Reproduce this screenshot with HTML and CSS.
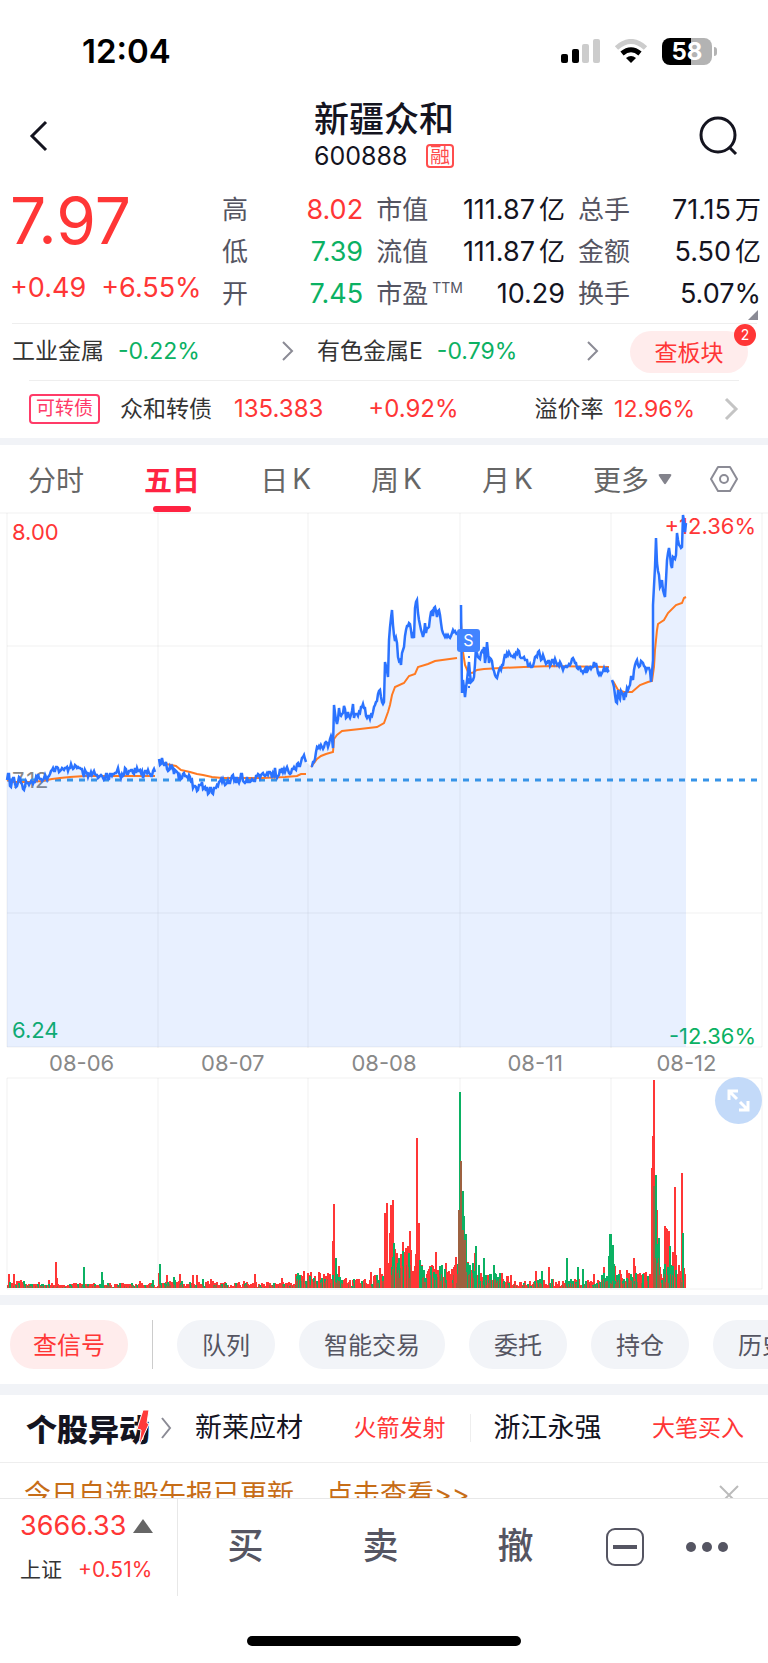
FILE: index.html
```html
<!DOCTYPE html>
<html lang="zh-CN">
<head>
    <meta charset="UTF-8">
    <meta name="viewport" content="width=device-width, initial-scale=1.0">
    <title>新疆众和 600888</title>
    <link rel="stylesheet" href="styles.css">
</head>
<body>
    <div class="status-bar">
        <span class="clock">12:04</span>
        <div class="status-icons">
            <svg width="39" height="24" viewBox="0 0 39 24">
                <rect x="0" y="15" width="7" height="9" rx="2"/>
                <rect x="11" y="10" width="7" height="14" rx="2"/>
                <rect x="21" y="5" width="7" height="19" rx="2" fill="#ccc"/>
                <rect x="32" y="0" width="7" height="24" rx="2" fill="#ccc"/>
            </svg>
            <svg width="34" height="24" viewBox="0 0 34 24" fill="none">
                <path d="M2.500 9 Q17 -4 31.500 9" stroke="#ccc" stroke-width="5"/>
                <path d="M8 14.500 Q17 7 26 14.500" stroke="#000" stroke-width="5"/>
                <path d="M12 19 Q17 15 22 19 L17 24 Z" fill="#000"/>
            </svg>
            <div class="battery"><span class="battery-level">58</span></div>
        </div>
    </div>

    <header class="header">
        <button class="icon-button" aria-label="返回">
            <svg width="20" height="32" viewBox="0 0 20 32" fill="none" stroke="#14141f" stroke-width="3"><path d="M17 2 L3 16 L17 30"/></svg>
        </button>
        <div class="header-title">
            <h1>新疆众和</h1>
            <p>600888 <span class="margin-tag">融</span></p>
        </div>
        <button class="icon-button" aria-label="搜索">
            <svg width="40" height="40" viewBox="0 0 40 40" fill="none" stroke="#14141f" stroke-width="3"><circle cx="19" cy="19" r="17"/><path d="M30 31 L37 38"/></svg>
        </button>
    </header>

    <section class="quote">
        <div class="quote-price">
            <div class="price">7.97</div>
            <div class="change"><span>+0.49</span><span>+6.55%</span></div>
        </div>
        <dl>
            <dt>高</dt><dd class="up">8.02</dd>
            <dt>低</dt><dd class="down">7.39</dd>
            <dt>开</dt><dd class="down">7.45</dd>
        </dl>
        <dl>
            <dt>市值</dt><dd>111.87<i>亿</i></dd>
            <dt>流值</dt><dd>111.87<i>亿</i></dd>
            <dt>市盈<sup>TTM</sup></dt><dd>10.29</dd>
        </dl>
        <dl>
            <dt>总手</dt><dd>71.15<i>万</i></dd>
            <dt>金额</dt><dd>5.50<i>亿</i></dd>
            <dt>换手</dt><dd>5.07%</dd>
        </dl>
    </section>

    <section class="sectors">
        <a class="sector" href="#">工业金属 <span class="down">-0.22%</span>
            <svg width="14" height="22" viewBox="0 0 14 22"><path d="M2 2 L11 11 L2 20"/></svg></a>
        <a class="sector" href="#">有色金属E <span class="down">-0.79%</span>
            <svg width="14" height="22" viewBox="0 0 14 22"><path d="M2 2 L11 11 L2 20"/></svg></a>
        <button class="board-button">查板块<span class="count">2</span></button>
    </section>

    <a class="bond" href="#">
        <span class="bond-tag">可转债</span>
        <span class="bond-name">众和转债</span>
        <span class="bond-price up">135.383</span>
        <span class="bond-change up">+0.92%</span>
        <span class="bond-premium">溢价率 <span class="up">12.96%</span></span>
        <svg width="16" height="26" viewBox="0 0 16 26"><path d="M3 3 L13 13 L3 23"/></svg>
    </a>

    <nav class="tabs">
        <button>分时</button>
        <button class="active">五日</button>
        <button>日<span>K</span></button>
        <button>周<span>K</span></button>
        <button>月<span>K</span></button>
        <button class="more">更多<svg width="14" height="12" viewBox="0 0 14 12"><path d="M2 1 H12 Q14 1 13 3 L8 10.500 Q7 12 6 10.500 L1 3 Q0 1 2 1Z" fill="#83838c"/></svg></button>
        <button class="settings" aria-label="设置">
            <svg width="28" height="26" viewBox="0 0 28 26" fill="none" stroke="#8b8b95" stroke-width="2"><path d="M8 1 H20 L27 13 L20 25 H8 L1 13Z" stroke-linejoin="round"/><circle cx="14" cy="13" r="4"/></svg>
        </button>
    </nav>

    <section class="price-chart">
        <span class="label top-left up">8.00</span>
        <span class="label top-right up">+12.36%</span>
        <span class="label middle-left">7.12</span>
        <span class="label bottom-left down">6.24</span>
        <span class="label bottom-right down">-12.36%</span>
        <svg viewBox="0 0 768 536" fill="none">
            <path class="grid" d="M0 1H768 M7 134H762 M7 401H762 M7 535H762 M7 1V535 M158 1V536 M308 1V536 M460 1V536 M611 1V536 M762 1V535"/>
            <path id="area" fill="#2b73ff" fill-opacity="0.11"/>
            <path d="M7 268H762" stroke="#3794e8" stroke-width="3" stroke-dasharray="6 6"/>
            <path id="average" stroke="#ff7a22" stroke-width="2"/>
            <path id="price" stroke="#2b73ff" stroke-width="2.500"/>
            <path d="M469 144V176" stroke="#2b73ff" stroke-width="2" stroke-dasharray="2 4"/>
            <circle cx="469" cy="169" r="3" fill="#2b73ff"/>
            <rect x="457" y="117" width="23" height="23" rx="3" fill="#4284ff"/>
            <text class="sell-mark" x="468.500" y="134" text-anchor="middle">S</text>
        </svg>
    </section>
    <div class="dates">
        <span>08-06</span><span>08-07</span><span>08-08</span><span>08-11</span><span>08-12</span>
    </div>
    <section class="volume-chart">
        <svg viewBox="0 0 768 213" fill="none">
            <path class="grid" d="M7 1H762V212H7Z M158 1V212 M308 1V212 M460 1V212 M611 1V212"/>
            <path id="volume-up" fill="#ff3636"/>
            <path id="volume-down" fill="#0bb163"/>
            <path id="volume-mixed" fill="#9d6140"/>
        </svg>
        <button class="expand" aria-label="全屏">
            <svg width="23" height="23" viewBox="0 0 23 23" fill="none" stroke="#fff" stroke-width="3"><path d="M2 11V2H11 M3 3L10 10 M21 12V21H12 M20 20L13 13"/></svg>
        </button>
    </section>

    <nav class="chips">
        <button class="chip signal">查信号</button>
        <span class="chip-divider"></span>
        <button class="chip">队列</button>
        <button class="chip">智能交易</button>
        <button class="chip">委托</button>
        <button class="chip">持仓</button>
        <button class="chip">历史</button>
    </nav>

    <section class="moves">
        <a class="moves-logo" href="#">个股异动<svg width="12" height="36" viewBox="0 0 12 36"><path d="M6 0 L12 0 L10 13 L12 14 L2 36 L4 20 L0 19Z" fill="#ff3a3a" stroke="#fff" stroke-width="1"/></svg></a>
        <svg width="12" height="24" viewBox="0 0 12 24"><path d="M2 2 L10 12 L2 22"/></svg>
        <div class="move"><span>新莱应材</span><em>火箭发射</em></div>
        <div class="move"><span>浙江永强</span><em>大笔买入</em></div>
    </section>

    <div class="notice">
        <a href="#"><span>今日自选股午报已更新</span><span>点击查看&gt;&gt;</span></a>
        <button aria-label="关闭"><svg width="20" height="20" viewBox="0 0 20 20" stroke="#bbb" stroke-width="2"><path d="M1 1L19 19M19 1L1 19"/></svg></button>
    </div>

    <footer class="trade-bar">
        <a class="index" href="#">
            <span class="index-value">3666.33<svg width="20" height="14" viewBox="0 0 20 14"><path d="M10 0L20 14H0Z" fill="#666"/></svg></span>
            <span class="index-name">上证 <span class="up">+0.51%</span></span>
        </a>
        <div class="trade-actions">
            <button>买</button>
            <button>卖</button>
            <button>撤</button>
        </div>
        <button aria-label="收起">
            <svg width="38" height="38" viewBox="0 0 38 38" fill="none" stroke="#555562"><rect x="1" y="1" width="36" height="36" rx="8" stroke-width="2"/><path d="M7 19H31" stroke-width="4"/></svg>
        </button>
        <button class="dots" aria-label="更多">
            <svg width="42" height="10" viewBox="0 0 42 10" fill="#555562"><circle cx="5" cy="5" r="5"/><circle cx="21" cy="5" r="5"/><circle cx="37" cy="5" r="5"/></svg>
        </button>
    </footer>
    <div class="home-indicator"></div>

    <script src="script.js"></script>
</body>
</html>
```

FILE: styles.css
```css
* {
    box-sizing: border-box;
}
body {
    margin: 0;
    background: #fff;
    color: #14141f;
    font-family: Inter, "Noto Sans CJK SC", sans-serif;
    font-size: 23px;
    overflow-x: hidden;
}
button {
    font: inherit;
    color: inherit;
    background: none;
    border: none;
    padding: 0;
    cursor: pointer;
}
a {
    color: inherit;
    text-decoration: none;
}
svg {
    display: block;
    flex-shrink: 0;
}
.up {
    color: #ff3636;
}
.down {
    color: #0bb163;
}

/* status bar and header */
.status-bar {
    display: flex;
    justify-content: space-between;
    align-items: center;
    height: 98px;
    padding: 4px 56px 0 82px;
    color: #000;
}
.clock {
    font-size: 33px;
    font-weight: 600;
}
.status-icons {
    display: flex;
    align-items: center;
    gap: 14px;
}
.battery {
    position: relative;
    width: 50px;
    height: 27px;
    border-radius: 8px;
    background: linear-gradient(90deg, #000 58%, #b3b3b3 58%);
    color: #fff;
    font-size: 24px;
    font-weight: 700;
    line-height: 27px;
    text-align: center;
}
.battery::after {
    content: "";
    position: absolute;
    right: -5px;
    top: 9px;
    width: 3px;
    height: 9px;
    border-radius: 0 4px 4px 0;
    background: #b3b3b3;
}
.header {
    display: flex;
    justify-content: space-between;
    align-items: flex-start;
    height: 91px;
    padding: 0 29px;
}
.header .icon-button {
    display: flex;
    align-items: center;
    width: 40px;
    height: 76px;
}
.header h1 {
    margin: 0;
    font-size: 35px;
    font-weight: 500;
    line-height: 42px;
}
.header p {
    display: flex;
    justify-content: space-between;
    align-items: center;
    margin: 0;
    font-size: 25px;
    line-height: 32px;
}
.margin-tag {
    border: 2px solid #ff4d4d;
    border-radius: 4px;
    color: #ff4d4d;
    font-size: 20px;
    line-height: 20px;
    padding: 0 2px;
}

/* quote */
.quote {
    position: relative;
    display: grid;
    grid-template-columns: 200fr 142fr 184fr 184fr;
    column-gap: 13px;
    height: 135px;
    margin: 0 7px 0 10px;
}
.quote::before {
    content: "";
    position: absolute;
    right: 3px;
    bottom: 4px;
    border-left: 10px solid transparent;
    border-bottom: 10px solid #8b8b95;
}
.quote::after {
    content: "";
    position: absolute;
    left: 2px;
    right: 4px;
    bottom: 0;
    border-bottom: 1px solid #eee;
}
.quote-price {
    color: #ff3636;
    white-space: nowrap;
}
.price {
    font-size: 64px;
    line-height: 64px;
}
.change {
    display: flex;
    gap: 15px;
    font-size: 27px;
    line-height: 32px;
    padding-top: 19px;
}
.quote dl {
    display: grid;
    grid-template-columns: auto 1fr;
    grid-auto-rows: 42px;
    margin: 0;
    font-size: 26px;
    line-height: 42px;
}
.quote dt {
    color: #555562;
    white-space: nowrap;
}
.quote dt sup {
    font-size: 14px;
    line-height: 14px;
    margin-left: 4px;
    vertical-align: 10px;
}
.quote dd {
    margin: 0;
    font-size: 27px;
    text-align: right;
    white-space: nowrap;
}
.quote dd i {
    font-style: normal;
    font-size: 26px;
    margin-left: 4px;
}

/* sectors and bond */
.sectors {
    display: flex;
    align-items: center;
    height: 56px;
    padding: 0 20px 0 12px;
    color: #333;
}
.sector {
    display: flex;
    align-items: center;
    gap: 14px;
    width: 305px;
    padding-right: 22px;
    line-height: 32px;
    padding-bottom: 2px;
}
.sector svg {
    margin-left: auto;
}
.sector path,
.bond path,
.moves > svg path {
    fill: none;
    stroke: #8b8b95;
    stroke-width: 2;
}
.board-button {
    position: relative;
    width: 118px;
    height: 42px;
    margin-left: auto;
    padding-bottom: 2px;
    border-radius: 21px;
    background: #ffecec;
    color: #ff3636;
}
.count {
    position: absolute;
    top: -7px;
    right: -8px;
    width: 22px;
    height: 22px;
    border-radius: 50%;
    background: #ff3636;
    color: #fff;
    font-size: 14px;
    line-height: 22px;
}
.bond {
    display: flex;
    align-items: center;
    height: 58px;
    margin: 0 29px;
    padding-bottom: 1px;
    border-top: 1px solid #eee;
    color: #333;
    line-height: 32px;
    white-space: nowrap;
}
.bond-tag {
    border: 2px solid #ff3b68;
    border-radius: 4px;
    color: #ff3b68;
    font-size: 19px;
    line-height: 26px;
    padding: 0 5px;
}
.bond-name {
    margin-left: 20px;
}
.bond-price {
    margin-left: 22px;
    font-size: 24px;
}
.bond-change {
    margin-left: 45px;
    font-size: 24px;
}
.bond-premium {
    margin-left: auto;
}
.bond-premium .up {
    margin-left: 4px;
}
.bond svg {
    margin-left: 28px;
}
.bond path {
    stroke: #c4c4c4;
    stroke-width: 3;
}

/* period tabs */
.tabs {
    display: flex;
    justify-content: space-between;
    border-top: 7px solid #f1f3f7;
    height: 74px;
    padding: 0 30px 0 28px;
    color: #666;
    font-size: 28px;
}
.tabs button {
    position: relative;
    display: flex;
    align-items: center;
    white-space: nowrap;
}
.tabs span {
    margin-left: 4px;
}
.tabs .active {
    color: #ff2342;
    font-weight: 700;
}
.tabs .active::after {
    content: "";
    position: absolute;
    left: 9px;
    right: 9px;
    bottom: 0;
    height: 6px;
    border-radius: 3px;
    background: #ff2342;
}
.tabs .more {
    gap: 9px;
}
.tabs .settings {
    margin-left: -22px;
}

/* charts */
.price-chart,
.volume-chart {
    position: relative;
}
.price-chart svg,
.volume-chart > svg {
    position: relative;
    width: 100%;
    height: auto;
}
.grid {
    stroke: #000;
    stroke-opacity: 0.06;
}
.label {
    position: absolute;
    font-size: 22px;
    line-height: 24px;
}
.top-left {
    top: 8px;
    left: 12px;
}
.top-right {
    top: 2px;
    right: 12px;
}
.middle-left {
    top: 50%;
    left: 12px;
    margin-top: -12px;
    color: #888;
}
.bottom-left {
    bottom: 6px;
    left: 12px;
}
.bottom-right {
    bottom: 0;
    right: 12px;
}
.sell-mark {
    fill: #fff;
    font-size: 16px;
}
.dates {
    display: flex;
    height: 29px;
    padding: 0 6px;
    color: #888;
    font-size: 22px;
    line-height: 30px;
}
.dates span {
    flex: 1;
    text-align: center;
}
.expand {
    position: absolute;
    top: 0;
    right: 6px;
    display: flex;
    align-items: center;
    justify-content: center;
    width: 47px;
    height: 47px;
    border-radius: 50%;
    background: #c3daf9;
}

/* shortcut chips */
.chips {
    display: flex;
    align-items: center;
    gap: 24px;
    height: 100px;
    margin-top: 5px;
    padding-left: 10px;
    border: solid #f1f3f7;
    border-width: 10px 0 11px;
    overflow: hidden;
    font-size: 24px;
}
.chip {
    flex-shrink: 0;
    height: 49px;
    padding: 0 25px 2px;
    border-radius: 24px;
    background: #f2f4f8;
    color: #555562;
}
.signal {
    padding: 0 23px 2px;
    background: #ffecec;
    color: #ff3636;
}
.chip-divider {
    flex-shrink: 0;
    width: 1px;
    height: 49px;
    background: #ccc;
}

/* stock moves */
.moves {
    display: flex;
    align-items: center;
    height: 68px;
    padding: 0 24px 2px 26px;
    border-bottom: 1px solid #eee;
    white-space: nowrap;
}
.moves-logo {
    position: relative;
    margin-right: 10px;
    font-size: 31px;
    font-weight: 900;
}
.moves-logo svg {
    position: absolute;
    right: 1px;
    bottom: 4px;
}
.move {
    flex: 1;
    display: flex;
    align-items: center;
    justify-content: space-between;
    padding: 0 24px 0 23px;
    font-size: 27px;
    line-height: 28px;
}
.move + .move {
    padding-right: 0;
    border-left: 1px solid #eee;
}
.move em {
    color: #ff3636;
    font-size: 23px;
    font-style: normal;
}

/* notice strip, cut off by the trade bar */
.notice {
    display: flex;
    justify-content: space-between;
    height: 35px;
    padding: 12px 29px 0 24px;
    overflow: hidden;
    color: #c76d17;
    font-size: 27px;
    line-height: 40px;
}
.notice a {
    display: flex;
    gap: 32px;
}
.notice button {
    padding-top: 10px;
    height: 30px;
}

/* trade bar */
.trade-bar {
    display: flex;
    align-items: center;
    height: 97px;
    padding-right: 40px;
    border-top: 1px solid #e8e8e8;
    color: #555562;
}
.index {
    display: flex;
    flex-direction: column;
    gap: 12px;
    width: 178px;
    height: 97px;
    padding: 11px 0 0 20px;
    border-right: 1px solid #e8e8e8;
    white-space: nowrap;
}
.index-value {
    display: flex;
    align-items: center;
    gap: 7px;
    color: #ff3636;
    font-size: 27px;
    line-height: 32px;
}
.index-name {
    display: flex;
    gap: 16px;
    color: #333;
    font-size: 21px;
    line-height: 32px;
}
.trade-actions {
    flex: 1;
    display: flex;
    justify-content: space-around;
    margin-right: 23px;
    font-size: 36px;
    font-weight: 500;
}
.trade-actions button {
    line-height: 48px;
    padding-bottom: 2px;
}
.dots {
    margin-left: 42px;
}
.home-indicator {
    width: 274px;
    height: 10px;
    margin: 41px auto 17px;
    border-radius: 5px;
    background: #000;
}
```

FILE: script.js
```javascript
// one entry per trading day, x,y pairs in chart units
const prices = [
    "7,268 9,262 10,274 14,266 15,272 17,274 19,265 22,272 24,278 26,269 30,271 34,270 37,267 38,262 40,267 44,266 48,265 51,259 53,256 58,256 60,259 64,258 66,256 70,256 71,252 74,256 78,255 81,257 83,262 87,261 88,265 91,260 95,262 98,266 102,264 104,268 107,262 108,267 110,262 116,261 118,256 120,263 124,263 125,256 127,262 130,259 138,259 141,261 144,263 146,259 149,261 152,264 153,259 155,260",
    "159,247 160,253 162,246 163,251 166,250 167,257 170,254 172,254 174,262 177,260 179,268 182,266 184,261 187,265 190,265 192,268 193,276 196,275 198,278 200,273 205,275 209,281 211,276 212,281 214,276 218,274 220,269 224,270 226,272 228,268 230,271 232,264 234,268 240,268 242,262 244,270 247,265 250,270 253,268 257,264 262,262 266,263 270,260 272,266 275,256 277,266 280,257 285,260 287,255 289,261 292,257 296,258 298,251 300,254 302,246 304,243 306,250",
    "311,254 314,250 316,240 318,236 322,235 324,235 326,230 328,235 331,224 333,236 334,193 337,212 339,196 341,204 344,194 346,206 348,200 350,206 353,192 354,206 358,204 360,201 362,195 365,196 367,206 370,207 373,200 376,190 378,182 380,178 382,190 384,190 385,150 388,165 389,128 392,98 394,123 397,131 398,145 400,148 401,153 402,141 404,135 406,118 409,111 411,118 412,126 414,126 415,96 417,88 418,101 421,118 423,125 425,111 426,121 429,115 431,100 433,104 435,95 437,105 439,98 441,111 444,123 448,123 449,125 453,118 457,123",
    "461,93 462,181 463,168 465,185 467,168 469,150 471,170 474,165 476,135 479,146 484,135 485,151 487,130 489,151 491,147 496,165 499,158 501,158 504,147 507,141 509,140 513,145 518,138 521,146 526,148 531,155 534,150 538,140 541,148 544,146 547,151 556,150 564,155 569,152 574,148 577,156 584,159 589,156 596,151 599,163 604,156 609,158",
    "612,168 615,183 617,191 618,178 619,185 622,181 624,188 627,176 629,175 631,165 633,168 635,153 636,150 639,155 642,150 646,159 650,159 651,170 653,148 653,93 655,55 656,26 657,51 659,63 660,75 662,68 663,78 665,85 667,48 669,36 672,56 673,45 676,43 677,21 679,33 682,35 683,3 685,20 686,11"
];
const averages = [
    "7,268 14,270 30,270 42,269 52,267 60,266 70,265 85,264 155,264",
    "159,249 166,252 176,254 181,258 190,260 197,262 203,263 212,265 222,266 262,266 285,265 297,264 301,262 306,262",
    "311,255 317,247 321,244 326,242 333,240 334,227 337,223 342,219 360,217 377,215 384,211 388,200 390,193 392,183 395,175 404,171 409,164 415,162 418,155 428,152 435,149 457,146",
    "461,110 463,140 465,153 468,160 472,161 477,158 484,157 501,156 524,155 551,154 609,155",
    "613,169 618,178 624,180 632,180 640,173 648,170 652,169 654,155 655,138 657,118 658,112 664,108 668,101 676,93 682,91 684,86 686,85"
];

let seed = 7;
function random() {
    seed = (seed * 16807) % 2147483647;
    return seed / 2147483647;
}

// minute ticks between the key points of a day
function addTicks(day) {
    const points = day.split(" ").map(p => p.split(",").map(Number));
    const result = [points[0]];
    for (let i = 1; i < points.length; i++) {
        const [x0, y0] = points[i - 1];
        const [x1, y1] = points[i];
        for (let x = x0 + 1; x < x1; x++) {
            const y = y0 + (y1 - y0) * (x - x0) / (x1 - x0);
            result.push([x, Math.round(y + (random() - 0.5) * 7)]);
        }
        result.push([x1, y1]);
    }
    return result.map(p => p.join(",")).join(" L");
}

const priceLines = prices.map(addTicks);
document.getElementById("price").setAttribute("d", priceLines.map(line => "M" + line).join(" "));
document.getElementById("area").setAttribute("d", "M7,535 L" + priceLines.join(" L") + " L686,535 Z");
document.getElementById("average").setAttribute("d", averages.map(line => "M" + line.replace(/ /g, " L")).join(" "));

// background volume: [from, to, min, max]
const ranges = [
    [7, 24, 3, 8], [25, 157, 1, 5], [158, 215, 2, 7], [216, 295, 1, 6],
    [296, 330, 5, 16], [331, 345, 5, 13], [346, 372, 2, 9], [373, 383, 6, 20],
    [384, 410, 14, 42], [411, 458, 8, 24], [459, 475, 16, 30], [476, 510, 4, 15],
    [511, 600, 1, 9], [601, 650, 5, 16], [651, 659, 20, 50], [660, 684, 8, 24]
];
const upSpikes = {
    8: 14, 13: 14, 38: 6, 48: 8, 55: 26, 56: 10, 79: 5, 119: 5, 139: 7, 158: 15, 166: 13, 179: 14, 192: 13,
    196: 13, 210: 9, 243: 7, 254: 14, 281: 10, 295: 14, 303: 17, 310: 16, 318: 16, 329: 14, 332: 47,
    333: 84, 338: 22, 370: 16, 379: 20, 384: 75, 385: 70, 386: 85, 389: 55, 390: 83, 392: 88, 394: 39, 400: 34,
    402: 46, 405: 40, 407: 42, 409: 57, 415: 34, 416: 150, 418: 65, 431: 23, 435: 36, 445: 25, 455: 31,
    458: 55, 474: 35, 535: 17, 548: 21, 593: 14, 603: 21, 614: 22, 619: 18, 626: 18,
    633: 30, 634: 22, 650: 12, 651: 120, 652: 152, 653: 208, 656: 78, 664: 62, 665: 60, 666: 59,
    668: 57, 672: 36, 674: 101, 675: 33, 681: 115, 684: 14
};
const downSpikes = {
    9: 6, 83: 21, 101: 16, 102: 8, 152: 8, 159: 24, 173: 11, 174: 8, 202: 9, 335: 30, 336: 14, 393: 45, 419: 28,
    421: 22, 459: 196, 462: 97, 463: 72, 465: 54, 467: 25, 475: 42, 478: 23, 483: 30, 493: 23, 541: 17,
    566: 30, 577: 21, 582: 19, 608: 32, 609: 54, 610: 54, 611: 43, 612: 43, 613: 24, 642: 14, 655: 113, 657: 44,
    658: 32, 669: 42, 682: 55
};
const mixedSpikes = { 458: 78, 460: 127, 462: 58, 464: 48, 653: 102 };

const bars = { up: "", down: "", mixed: "" };
function addBar(kind, x, height, width) {
    bars[kind] += `M${x} 211v${-height}h${width}v${height}z`;
}
for (const [from, to, min, max] of ranges) {
    for (let x = from; x <= to; x++) {
        const height = Math.round(min + (max - min) * random());
        const pick = random();
        const kind = pick < 0.75 ? "up" : "down";
        addBar(kind, x, height, 2);
        if (pick > 0.6) addBar("mixed", x, Math.round(height * 0.6), 1);
    }
}
for (const x in upSpikes) addBar("up", x, upSpikes[x], 2);
for (const x in downSpikes) addBar("down", x, downSpikes[x], 2);
for (const x in mixedSpikes) addBar("mixed", x, mixedSpikes[x], 2);
for (const kind in bars) {
    document.getElementById("volume-" + kind).setAttribute("d", bars[kind]);
}
```
